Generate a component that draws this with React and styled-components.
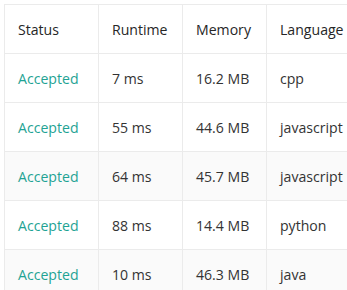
import React from 'react'
import styled, { createGlobalStyle } from 'styled-components'

const GlobalStyle = createGlobalStyle`
  html, body {
    margin: 0;
    padding: 0;
    background: #fff;
    overflow: hidden;
  }
  body {
    font-family: 'Open Sans', 'Noto Sans', sans-serif;
  }
`

const Wrapper = styled.section`
  padding: 4px 0 0 4px;
  width: 343px;
  height: 286px;
  overflow: hidden;
`

const Table = styled.table`
  border-collapse: collapse;
  table-layout: fixed;
  width: 400px;
  font-size: 14.1px;
  color: #262626;
`

const Col = styled.col`
  width: ${(p) => p.$w}px;
`

const Row = styled.tr`
  background: ${(p) => (p.$shaded ? '#fafafa' : '#fff')};
`

const HeadCell = styled.th`
  height: 48px;
  padding: 0 0 0 13px;
  text-align: left;
  font-weight: 400;
  border-top: 1px solid #ebebeb;
  border-left: 1px solid #ebebeb;
  white-space: nowrap;
  overflow: hidden;
`

const Cell = styled.td`
  height: 48px;
  padding: 0 0 0 13px;
  border-top: 1px solid #ebebeb;
  border-left: 1px solid #ebebeb;
  white-space: nowrap;
  overflow: hidden;
  color: ${(p) => (p.$status ? '#1fa394' : '#333')};
`

const submissions = [
  { status: 'Accepted', runtime: '7 ms', memory: '16.2 MB', lang: 'cpp', shaded: false },
  { status: 'Accepted', runtime: '55 ms', memory: '44.6 MB', lang: 'javascript', shaded: false },
  { status: 'Accepted', runtime: '64 ms', memory: '45.7 MB', lang: 'javascript', shaded: true },
  { status: 'Accepted', runtime: '88 ms', memory: '14.4 MB', lang: 'python', shaded: false },
  { status: 'Accepted', runtime: '10 ms', memory: '46.3 MB', lang: 'java', shaded: true },
]

function App() {
  return (
    <Wrapper>
      <GlobalStyle />
      <Table>
        <colgroup>
          <Col $w={94} />
          <Col $w={84} />
          <Col $w={84} />
          <Col $w={138} />
        </colgroup>
        <thead>
          <Row>
            <HeadCell>Status</HeadCell>
            <HeadCell>Runtime</HeadCell>
            <HeadCell>Memory</HeadCell>
            <HeadCell>Language</HeadCell>
          </Row>
        </thead>
        <tbody>
          {submissions.map((s, i) => (
            <Row key={i} $shaded={s.shaded}>
              <Cell $status>{s.status}</Cell>
              <Cell>{s.runtime}</Cell>
              <Cell>{s.memory}</Cell>
              <Cell>{s.lang}</Cell>
            </Row>
          ))}
        </tbody>
      </Table>
    </Wrapper>
  )
}

export default App
